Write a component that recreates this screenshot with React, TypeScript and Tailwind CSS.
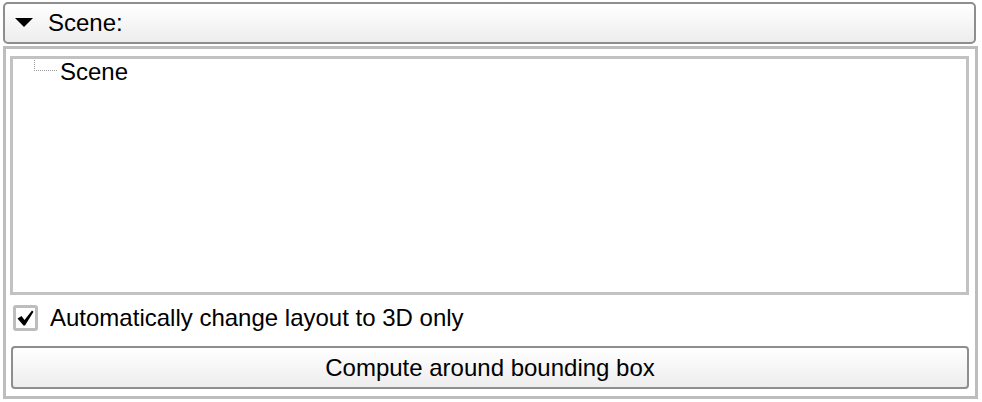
import React from "react";

export default function App() {
  return (
    <div
      className="w-[982px] h-[402px] bg-white px-[3px] pt-[2px] text-black overflow-hidden"
      style={{ fontFamily: '"Liberation Sans", Arial, sans-serif' }}
    >
      {/* Header */}
      <div className="mr-[3px] h-[42px] border-2 border-[#8e8e8e] rounded-[5px] bg-linear-to-b from-white to-[#ededed] flex items-center">
        <svg width="18" height="10" viewBox="0 0 18 10" className="ml-[10px]">
          <polygon points="0,0 18,0 9,9" fill="#000" />
        </svg>
        <span className="ml-[15px] text-[24px] leading-none">Scene:</span>
      </div>

      {/* Panel */}
      <div className="mt-[2px] mr-[1px] h-[353px] border-[3px] border-[#bdbdbd] pl-[4px] pr-[6px] pt-[7px] flex flex-col">
        {/* Tree */}
        <div className="h-[239px] border-[3px] border-[#c2c2c2] bg-white relative">
          <div className="flex items-start">
            <div className="ml-[21px] mt-[1px] w-[23px] h-[11px] border-l border-b border-dotted border-[#9a9a9a]" />
            <span className="ml-[3px] text-[24px] leading-[26px]">Scene</span>
          </div>
        </div>

        {/* Checkbox row */}
        <div className="mt-[10px] flex items-center h-[26px]">
          <div className="ml-[3px] w-[25px] h-[26px] border-[3px] border-[#bdbdbd] rounded-[3px] bg-white flex items-center justify-center">
            <svg width="17" height="16" viewBox="0 0 17 16">
              <path d="M0.5 8.5 L4.5 6 L7.5 10 L15 0.5 L16.5 1.8 L8 15.5 L6.5 15.5 Z" fill="#000" />
            </svg>
          </div>
          <span className="ml-[12px] text-[24px] leading-none">Automatically change layout to 3D only</span>
        </div>

        {/* Button */}
        <div className="mt-[15px] ml-[1px] h-[43px] border-2 border-[#8e8e8e] rounded-[4px] bg-linear-to-b from-white to-[#ededed] flex items-center justify-center">
          <span className="text-[24px] leading-none">Compute around bounding box</span>
        </div>
      </div>
    </div>
  );
}
